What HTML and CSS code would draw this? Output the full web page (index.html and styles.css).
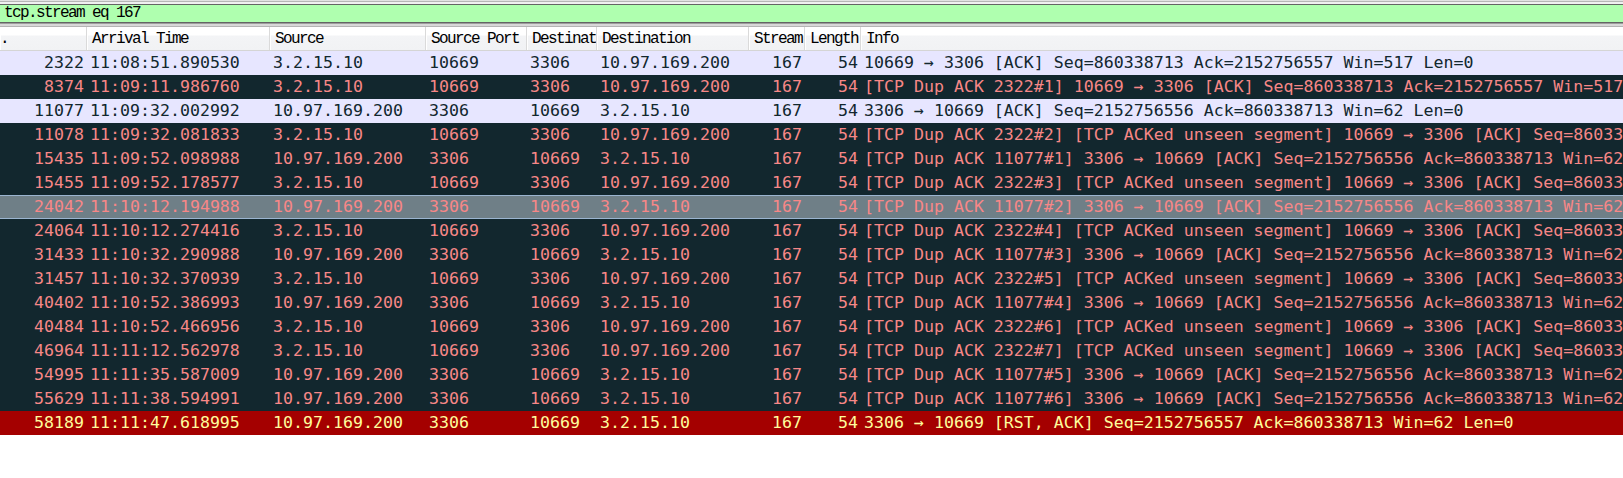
FILE: index.html
```html
<!DOCTYPE html>
<html>
<head>
<meta charset="utf-8">
<link rel="stylesheet" href="styles.css">
</head>
<body>
<div class="chrome-top"></div>
<div class="filter">tcp.stream eq 167</div>
<div class="chrome-sep"></div>
<div class="list">
  <div class="hdr">
    <div class="hc">.</div>
    <div class="hc">Arrival Time</div>
    <div class="hc">Source</div>
    <div class="hc">Source Port</div>
    <div class="hc">Destinat</div>
    <div class="hc">Destination</div>
    <div class="hc">Stream</div>
    <div class="hc">Length</div>
    <div class="hc">Info</div>
  </div>

  <div class="row tcp"><span class="r">2322</span><span>11:08:51.890530</span><span>3.2.15.10</span><span>10669</span><span>3306</span><span>10.97.169.200</span><span class="r">167</span><span class="r">54</span><span>10669 → 3306 [ACK] Seq=860338713 Ack=2152756557 Win=517 Len=0</span></div>
  <div class="row bad"><span class="r">8374</span><span>11:09:11.986760</span><span>3.2.15.10</span><span>10669</span><span>3306</span><span>10.97.169.200</span><span class="r">167</span><span class="r">54</span><span>[TCP Dup ACK 2322#1] 10669 → 3306 [ACK] Seq=860338713 Ack=2152756557 Win=517 Len=0</span></div>
  <div class="row tcp"><span class="r">11077</span><span>11:09:32.002992</span><span>10.97.169.200</span><span>3306</span><span>10669</span><span>3.2.15.10</span><span class="r">167</span><span class="r">54</span><span>3306 → 10669 [ACK] Seq=2152756556 Ack=860338713 Win=62 Len=0</span></div>
  <div class="row bad"><span class="r">11078</span><span>11:09:32.081833</span><span>3.2.15.10</span><span>10669</span><span>3306</span><span>10.97.169.200</span><span class="r">167</span><span class="r">54</span><span>[TCP Dup ACK 2322#2] [TCP ACKed unseen segment] 10669 → 3306 [ACK] Seq=860338713 Ack=2152756557 Win=517 Len=0</span></div>
  <div class="row bad"><span class="r">15435</span><span>11:09:52.098988</span><span>10.97.169.200</span><span>3306</span><span>10669</span><span>3.2.15.10</span><span class="r">167</span><span class="r">54</span><span>[TCP Dup ACK 11077#1] 3306 → 10669 [ACK] Seq=2152756556 Ack=860338713 Win=62 Len=0</span></div>
  <div class="row bad"><span class="r">15455</span><span>11:09:52.178577</span><span>3.2.15.10</span><span>10669</span><span>3306</span><span>10.97.169.200</span><span class="r">167</span><span class="r">54</span><span>[TCP Dup ACK 2322#3] [TCP ACKed unseen segment] 10669 → 3306 [ACK] Seq=860338713 Ack=2152756557 Win=517 Len=0</span></div>
  <div class="row sel"><span class="r">24042</span><span>11:10:12.194988</span><span>10.97.169.200</span><span>3306</span><span>10669</span><span>3.2.15.10</span><span class="r">167</span><span class="r">54</span><span>[TCP Dup ACK 11077#2] 3306 → 10669 [ACK] Seq=2152756556 Ack=860338713 Win=62 Len=0</span></div>
  <div class="row bad"><span class="r">24064</span><span>11:10:12.274416</span><span>3.2.15.10</span><span>10669</span><span>3306</span><span>10.97.169.200</span><span class="r">167</span><span class="r">54</span><span>[TCP Dup ACK 2322#4] [TCP ACKed unseen segment] 10669 → 3306 [ACK] Seq=860338713 Ack=2152756557 Win=517 Len=0</span></div>
  <div class="row bad"><span class="r">31433</span><span>11:10:32.290988</span><span>10.97.169.200</span><span>3306</span><span>10669</span><span>3.2.15.10</span><span class="r">167</span><span class="r">54</span><span>[TCP Dup ACK 11077#3] 3306 → 10669 [ACK] Seq=2152756556 Ack=860338713 Win=62 Len=0</span></div>
  <div class="row bad"><span class="r">31457</span><span>11:10:32.370939</span><span>3.2.15.10</span><span>10669</span><span>3306</span><span>10.97.169.200</span><span class="r">167</span><span class="r">54</span><span>[TCP Dup ACK 2322#5] [TCP ACKed unseen segment] 10669 → 3306 [ACK] Seq=860338713 Ack=2152756557 Win=517 Len=0</span></div>
  <div class="row bad"><span class="r">40402</span><span>11:10:52.386993</span><span>10.97.169.200</span><span>3306</span><span>10669</span><span>3.2.15.10</span><span class="r">167</span><span class="r">54</span><span>[TCP Dup ACK 11077#4] 3306 → 10669 [ACK] Seq=2152756556 Ack=860338713 Win=62 Len=0</span></div>
  <div class="row bad"><span class="r">40484</span><span>11:10:52.466956</span><span>3.2.15.10</span><span>10669</span><span>3306</span><span>10.97.169.200</span><span class="r">167</span><span class="r">54</span><span>[TCP Dup ACK 2322#6] [TCP ACKed unseen segment] 10669 → 3306 [ACK] Seq=860338713 Ack=2152756557 Win=517 Len=0</span></div>
  <div class="row bad"><span class="r">46964</span><span>11:11:12.562978</span><span>3.2.15.10</span><span>10669</span><span>3306</span><span>10.97.169.200</span><span class="r">167</span><span class="r">54</span><span>[TCP Dup ACK 2322#7] [TCP ACKed unseen segment] 10669 → 3306 [ACK] Seq=860338713 Ack=2152756557 Win=517 Len=0</span></div>
  <div class="row bad"><span class="r">54995</span><span>11:11:35.587009</span><span>10.97.169.200</span><span>3306</span><span>10669</span><span>3.2.15.10</span><span class="r">167</span><span class="r">54</span><span>[TCP Dup ACK 11077#5] 3306 → 10669 [ACK] Seq=2152756556 Ack=860338713 Win=62 Len=0</span></div>
  <div class="row bad"><span class="r">55629</span><span>11:11:38.594991</span><span>10.97.169.200</span><span>3306</span><span>10669</span><span>3.2.15.10</span><span class="r">167</span><span class="r">54</span><span>[TCP Dup ACK 11077#6] 3306 → 10669 [ACK] Seq=2152756556 Ack=860338713 Win=62 Len=0</span></div>
  <div class="row rst"><span class="r">58189</span><span>11:11:47.618995</span><span>10.97.169.200</span><span>3306</span><span>10669</span><span>3.2.15.10</span><span class="r">167</span><span class="r">54</span><span>3306 → 10669 [RST, ACK] Seq=2152756557 Ack=860338713 Win=62 Len=0</span></div>
</div>
</body>
</html>
```

FILE: styles.css
```css
html, body {
  margin: 0;
  padding: 0;
  background: #ffffff;
  width: 1623px;
  overflow: hidden;
}

/* window chrome above the filter bar: y=0 light, y=1 gray, y=2-3 light */
.chrome-top {
  height: 1px;
  border-top: 1px solid #e2e2e2;
  border-bottom: 2px solid #f0f0f0;
  background: #b6b6b6;
}

.filter {
  height: 17px;
  border-top: 1px solid #646464;
  border-bottom: 1px solid #646464;
  background: #afffaf;
  font-family: "Liberation Mono", monospace;
  font-size: 16px;
  letter-spacing: -1.6px;
  line-height: 17px;
  padding-left: 4px;
  color: #000;
  white-space: nowrap;
  overflow: hidden;
}

.chrome-sep {
  height: 2px;
  border-top: 1px solid #9c9c9c;
  border-bottom: 1px solid #b4b4b4;
  background: #d8d8d8;
}

.list {
  display: flex;
  flex-direction: column;
}

.hdr, .row {
  display: grid;
  grid-template-columns: 87px 183px 156px 101px 70px 152px 56px 56px 1fr;
  width: 1623px;
}

.hdr {
  height: 23px;
  border-bottom: 1px solid #d5d5d5;
  background: linear-gradient(#ffffff 0, #ffffff 8px, #f3f4f6 9px, #f1f2f4 100%);
}

.hc {
  font-family: "Liberation Mono", monospace;
  font-size: 16px;
  letter-spacing: -1.6px;
  line-height: 24px;
  color: #000;
  padding-left: 5px;
  border-right: 1px solid #dadada;
  box-shadow: inset 1px 0 0 #ffffff;
  white-space: nowrap;
  overflow: hidden;
}

.hc:first-child {
  padding-left: 0;
}

.hc:last-child {
  border-right: 0;
}

.row {
  height: 24px;
  font-family: "DejaVu Sans Mono", monospace;
  font-size: 16.6px;
  line-height: 24px;
  white-space: nowrap;
  overflow: hidden;
}

.row span {
  padding: 0 3px;
  overflow: hidden;
  white-space: nowrap;
}

.row span.r {
  text-align: right;
}

.row span:last-child {
  padding-right: 0;
}

.tcp {
  background: #e7e6ff;
  color: #12272e;
}

.bad {
  background: #12272e;
  color: #f78787;
}

.sel {
  background: #6f7f87;
  color: #f78787;
  border-top: 1px solid #9bb5d0;
  border-bottom: 1px solid #9bb5d0;
  height: 22px;
  line-height: 22px;
}

.rst {
  background: #a40000;
  color: #fffc9c;
}
```
